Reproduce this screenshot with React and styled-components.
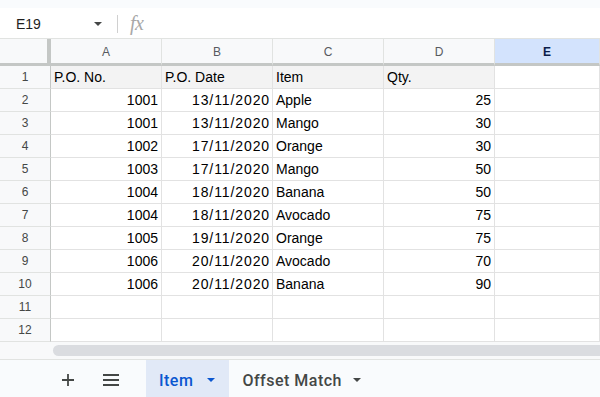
import React from "react";
import styled, { createGlobalStyle } from "styled-components";

const GlobalStyle = createGlobalStyle`
  html, body { margin: 0; padding: 0; background: #ffffff; }
  body { font-family: "Liberation Sans", Arial, sans-serif; overflow: hidden; }
`;

const rows = [
  ["P.O. No.", "P.O. Date", "Item", "Qty."],
  ["1001", "13/11/2020", "Apple", "25"],
  ["1001", "13/11/2020", "Mango", "30"],
  ["1002", "17/11/2020", "Orange", "30"],
  ["1003", "17/11/2020", "Mango", "50"],
  ["1004", "18/11/2020", "Banana", "50"],
  ["1004", "18/11/2020", "Avocado", "75"],
  ["1005", "19/11/2020", "Orange", "75"],
  ["1006", "20/11/2020", "Avocado", "70"],
  ["1006", "20/11/2020", "Banana", "90"],
  ["", "", "", ""],
  ["", "", "", ""],
];

const columns = ["A", "B", "C", "D", "E"];

function App() {
  return (
    <Page>
      <GlobalStyle />
      <TopStrip />
      <FormulaBar>
        <NameBox>
          E19
          <Caret />
        </NameBox>
        <Divider />
        <Fx>fx</Fx>
      </FormulaBar>
      <Grid>
        <Corner />
        {columns.map((c) => (
          <ColHeader key={c} selected={c === "E"}>
            {c}
          </ColHeader>
        ))}
        {rows.map((row, i) => (
          <React.Fragment key={i}>
            <RowHeader>{i + 1}</RowHeader>
            {row.map((v, j) => (
              <Cell
                key={j}
                header={i === 0}
                numeric={i > 0 && (j === 0 || j === 1 || j === 3)}
                date={i > 0 && j === 1}
              >
                {v}
              </Cell>
            ))}
            <Cell />
          </React.Fragment>
        ))}
      </Grid>
      <ScrollArea>
        <ScrollGutter />
        <ScrollThumb />
      </ScrollArea>
      <TabBar>
        <IconButton>
          <svg width="14" height="14" viewBox="0 0 14 14">
            <path d="M7 1v12M1 7h12" stroke="#444746" strokeWidth="1.8" />
          </svg>
        </IconButton>
        <IconButton>
          <svg width="18" height="14" viewBox="0 0 18 14">
            <path
              d="M1 2h16M1 7h16M1 12h16"
              stroke="#444746"
              strokeWidth="1.8"
            />
          </svg>
        </IconButton>
        <Tab active>
          Item
          <TabCaret active />
        </Tab>
        <Tab>
          Offset Match
          <TabCaret />
        </Tab>
      </TabBar>
    </Page>
  );
}

export default App;

const Page = styled.div`
  width: 600px;
  height: 397px;
  display: flex;
  flex-direction: column;
  overflow: hidden;
  background: #ffffff;
`;

const TopStrip = styled.div`
  height: 8px;
  background: #f9fbfd;
`;

const FormulaBar = styled.div`
  height: 31px;
  display: flex;
  align-items: center;
  border-bottom: 1px solid #e1e3e1;
  padding-top: 1px;
  box-sizing: border-box;
`;

const NameBox = styled.div`
  width: 102px;
  box-sizing: border-box;
  padding-left: 16px;
  display: flex;
  align-items: center;
  justify-content: space-between;
  font-size: 14px;
  color: #1f1f1f;
`;

const Caret = styled.span`
  width: 0;
  height: 0;
  border-left: 4px solid transparent;
  border-right: 4px solid transparent;
  border-top: 4px solid #444746;
`;

const Divider = styled.div`
  width: 1px;
  height: 18px;
  background: #d0d0d0;
  margin-left: 15px;
`;

const Fx = styled.span`
  margin-left: 12px;
  font-family: "Liberation Serif", serif;
  font-style: italic;
  font-size: 20px;
  color: #a8a8a8;
  letter-spacing: -0.5px;
`;

const Grid = styled.div`
  display: grid;
  grid-template-columns: 51px 111px 111px 111px 111px 105px;
  grid-template-rows: 27px repeat(12, 23px);
`;

const Corner = styled.div`
  background: #f8f9fa;
  border-right: 4px solid #c4c7c5;
  border-bottom: 3px solid #c4c7c5;
  box-sizing: border-box;
`;

const ColHeader = styled.div`
  display: flex;
  align-items: center;
  justify-content: center;
  box-sizing: border-box;
  font-size: 12px;
  color: ${(p) => (p.selected ? "#0b1d4a" : "#575a5f")};
  font-weight: ${(p) => (p.selected ? "bold" : "normal")};
  background: ${(p) => (p.selected ? "#d3e3fd" : "#f8f9fa")};
  border-right: 1px solid #e1e3e1;
  border-bottom: 3px solid #c4c7c5;
  padding-top: 1px;
`;

const RowHeader = styled.div`
  display: flex;
  align-items: center;
  justify-content: center;
  box-sizing: border-box;
  font-size: 12px;
  color: #444746;
  background: #f8f9fa;
  border-right: 1px solid #c4c7c5;
  border-bottom: 1px solid #e1e3e1;
`;

const Cell = styled.div`
  display: flex;
  align-items: center;
  justify-content: ${(p) => (p.numeric ? "flex-end" : "flex-start")};
  box-sizing: border-box;
  padding: 0 ${(p) => (p.date ? "2px" : "3px")} 0 3px;
  font-size: 14px;
  letter-spacing: ${(p) => (p.date ? "0.9px" : "normal")};
  color: #000000;
  white-space: nowrap;
  background: ${(p) => (p.header ? "#f3f3f3" : "#ffffff")};
  border-right: 1px solid #e2e2e2;
  border-bottom: 1px solid #e2e2e2;
`;

const ScrollArea = styled.div`
  height: 17px;
  display: flex;
  align-items: center;
  background: #f8f9fa;
  border-bottom: 1px solid #e1e3e1;
`;

const ScrollGutter = styled.div`
  width: 53px;
`;

const ScrollThumb = styled.div`
  flex: 1;
  height: 11px;
  background: #dadce0;
  border-radius: 6px 0 0 6px;
`;

const TabBar = styled.div`
  flex: 1;
  display: flex;
  align-items: stretch;
  padding-left: 56px;
  background: #f9fbfd;
`;

const IconButton = styled.div`
  width: 24px;
  display: flex;
  align-items: center;
  justify-content: center;
  margin-right: 19px;
  padding-top: 3px;
`;

const Tab = styled.div`
  display: flex;
  align-items: center;
  gap: ${(p) => (p.active ? "14px" : "11px")};
  padding: 3px 14px 0 13px;
  margin-left: ${(p) => (p.active ? "4px" : "0")};
  font-family: Roboto, "Liberation Sans", sans-serif;
  font-size: 16px;
  font-weight: 500;
  letter-spacing: 0.5px;
  color: ${(p) => (p.active ? "#0b57d0" : "#444746")};
  background: ${(p) => (p.active ? "#e1e9f7" : "transparent")};
`;

const TabCaret = styled.span`
  width: 0;
  height: 0;
  border-left: 4px solid transparent;
  border-right: 4px solid transparent;
  border-top: 4px solid ${(p) => (p.active ? "#0b57d0" : "#444746")};
`;
